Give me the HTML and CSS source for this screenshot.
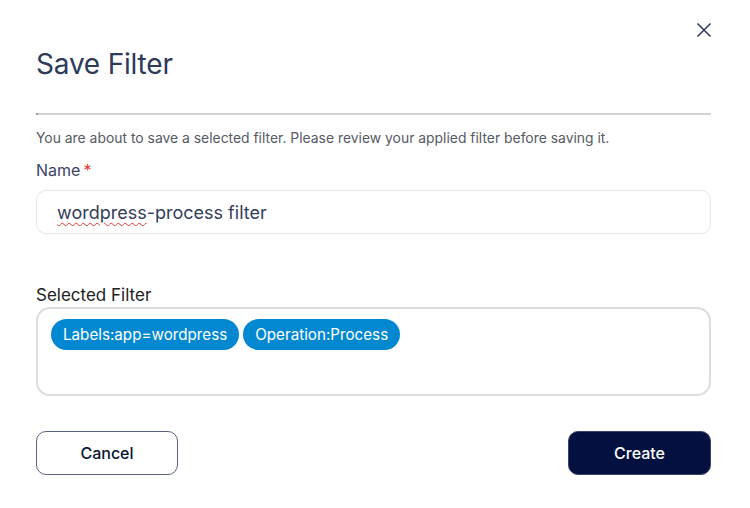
FILE: index.html
```html
<!DOCTYPE html>
<html>
<head>
<meta charset="utf-8">
<link rel="stylesheet" href="styles.css">
</head>
<body>
<div class="dialog">
  <div class="top">
    <button class="close" aria-label="Close">
      <svg width="16" height="16" viewBox="0 0 16 16"><path d="M1.5 1.5 L14.5 14.5 M14.5 1.5 L1.5 14.5" stroke="#2d3a5a" stroke-width="1.5" fill="none"/></svg>
    </button>
  </div>
  <h1 class="title">Save Filter</h1>
  <div class="divider"></div>
  <p class="desc">You are about to save a selected filter. Please review your applied filter before saving it.</p>
  <label class="label">Name<span class="req">*</span></label>
  <div class="input"><span class="spell">wordpress</span>-process filter</div>
  <div class="label2">Selected Filter</div>
  <div class="chips">
    <span class="chip">Labels:app=wordpress</span>
    <span class="chip">Operation:Process</span>
  </div>
  <div class="actions">
    <button class="btn cancel">Cancel</button>
    <button class="btn create">Create</button>
  </div>
</div>
</body>
</html>
```
FILE: styles.css
```css
html, body { margin: 0; padding: 0; background: #fff; }
body { font-family: Inter, "Noto Sans", sans-serif; }
.dialog { padding: 0 39px 0 36px; display: flex; flex-direction: column; }
.top { height: 46px; display: flex; justify-content: flex-end; align-items: flex-start; }
.close { margin-top: 22px; margin-right: -1px; width: 16px; height: 16px; padding: 0; border: 0; background: none; display: flex; }
.title { margin: 0; font-size: 28px; font-weight: 400; color: #2d3a5a; line-height: 36px; letter-spacing: -0.2px; }
.divider { margin-top: 31px; height: 2px; background: #d4d4d4; border-left: 2px solid #9a9a9a; }
.desc { margin: 14px 0 0; font-size: 13.9px; color: #555a63; line-height: 18px; }
.label { margin-top: 13px; font-size: 16px; color: #3a4466; line-height: 20px; }
.req { color: #e53935; margin-left: 3px; }
.input { margin-top: 10px; height: 42px; border: 1px solid #e2e6ee; border-radius: 10px; padding: 0 20px; display: flex; align-items: center; font-size: 18px; color: #333d5c; }
.spell { text-decoration: underline wavy #e53935; text-decoration-thickness: 1px; text-underline-offset: 3px; }
.label2 { margin-top: 50px; font-size: 17px; color: #222; line-height: 22px; }
.chips { margin-top: 1px; height: 61px; border: 2px solid #dcdcdc; border-radius: 14px; padding: 10px 13px 14px; display: flex; align-items: flex-start; gap: 4px; }
.chip { background: #0288d1; color: #fff; font-size: 15.2px; height: 31px; line-height: 31px; padding: 0 12px; border-radius: 16px; }
.actions { margin-top: 35px; display: flex; justify-content: space-between; }
.btn { width: 142px; height: 44px; border-radius: 10px; font-family: Inter, "Noto Sans", sans-serif; font-size: 16px; font-weight: 500; }
.cancel { background: #fff; border: 1px solid #5b6384; color: #0a1435; }
.create { width: 143px; background: #031040; border: 1px solid #3a4468; color: #fff; }
```
